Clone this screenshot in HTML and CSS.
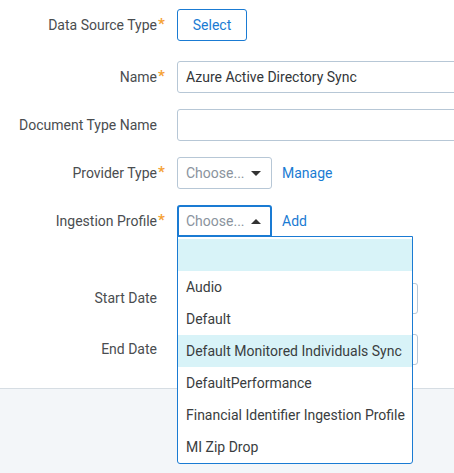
FILE: index.html
```html
<!DOCTYPE html>
<html>
<head>
<meta charset="utf-8">
<link rel="stylesheet" href="styles.css">
</head>
<body>
<div class="page">
  <form class="panel">
    <div class="row row-first">
      <div class="label">Data Source Type<span class="mark">*</span></div>
      <div class="control"><button type="button" class="btn">Select</button></div>
    </div>
    <div class="row row-name">
      <div class="label">Name<span class="mark">*</span></div>
      <div class="control clip"><div class="input wide">Azure Active Directory Sync</div></div>
    </div>
    <div class="row">
      <div class="label">Document Type Name<span class="mark"></span></div>
      <div class="control clip"><div class="input wide"></div></div>
    </div>
    <div class="row">
      <div class="label">Provider Type<span class="mark">*</span></div>
      <div class="control">
        <div class="select"><span class="ph">Choose...</span><span class="caret down"></span></div>
        <a class="link">Manage</a>
      </div>
    </div>
    <div class="row">
      <div class="label">Ingestion Profile<span class="mark">*</span></div>
      <div class="control">
        <div class="combo">
          <div class="select open"><span class="ph">Choose...</span><span class="caret up"></span></div>
          <ul class="menu">
            <li class="item hl">&nbsp;</li>
            <li class="item">Audio</li>
            <li class="item">Default</li>
            <li class="item hl">Default Monitored Individuals Sync</li>
            <li class="item">DefaultPerformance</li>
            <li class="item">Financial Identifier Ingestion Profile</li>
            <li class="item">MI Zip Drop</li>
          </ul>
        </div>
        <a class="link">Add</a>
      </div>
    </div>
    <div class="row row-start">
      <div class="label">Start Date<span class="mark"></span></div>
      <div class="control"><div class="input date"></div></div>
    </div>
    <div class="row row-end">
      <div class="label">End Date<span class="mark"></span></div>
      <div class="control"><div class="input date"></div></div>
    </div>
  </form>
  <div class="footer"></div>
</div>
</body>
</html>
```
FILE: styles.css
```css
html, body {
  margin: 0;
  padding: 0;
  overflow: hidden;
}
body {
  font-family: Roboto, "Liberation Sans", Arial, sans-serif;
  font-size: 14px;
  color: #3c4043;
  background: #f3f6f9;
}
.page {
  width: 454px;
  height: 473px;
  display: flex;
  flex-direction: column;
}
.panel {
  background: #ffffff;
  border-bottom: 1px solid #d6dde3;
  padding: 9px 0 23px 0;
  margin: 0;
}
.row {
  display: grid;
  grid-template-columns: 165px 1fr;
  column-gap: 12px;
  align-items: center;
  height: 32px;
  margin-top: 16px;
}
.row-first { margin-top: 0; }
.row-name { margin-top: 20px; }
.row-start { margin-top: 45px; }
.row-end { margin-top: 19px; }
.label {
  display: flex;
  justify-content: flex-end;
  align-items: flex-start;
  color: #4a4d50;
  white-space: nowrap;
  line-height: 16px;
}
.mark {
  display: inline-block;
  width: 8px;
  color: #f5a235;
  font-size: 15px;
  font-weight: 700;
  line-height: 14px;
  padding-left: 1px;
  box-sizing: border-box;
}
.control {
  display: flex;
  align-items: center;
  gap: 10px;
  min-width: 0;
}
.control.clip {
  overflow: hidden;
}
.btn {
  width: 70px;
  height: 32px;
  border: 1px solid #1a7bd3;
  border-radius: 3px;
  background: #fff;
  color: #1a7bd3;
  font-family: inherit;
  font-size: 14px;
  padding: 0;
}
.input {
  box-sizing: border-box;
  height: 32px;
  border: 1px solid #b7c7d6;
  border-radius: 3px;
  padding: 0 8px;
  line-height: 30px;
  color: #333639;
  white-space: nowrap;
  flex: none;
}
.wide { width: 320px; }
.date { width: 241px; height: 31px; }
.select {
  box-sizing: border-box;
  width: 95px;
  height: 32px;
  border: 1px solid #b7c7d6;
  border-radius: 3px;
  padding: 0 10px 0 8px;
  display: flex;
  align-items: center;
  justify-content: space-between;
}
.select.open {
  border: 2px solid #1a7bd3;
  border-radius: 3px 3px 0 0;
  padding-left: 7px;
  padding-right: 9px;
}
.ph { color: #8a939d; }
.caret {
  width: 0;
  height: 0;
  border-left: 5px solid transparent;
  border-right: 5px solid transparent;
}
.caret.down { border-top: 5px solid #333; }
.caret.up { border-bottom: 5px solid #333; }
.link {
  color: #1a7bd3;
  cursor: pointer;
}
.combo {
  position: relative;
}
.menu {
  position: absolute;
  left: 0;
  top: 31px;
  z-index: 5;
  width: 236px;
  box-sizing: border-box;
  margin: 0;
  padding: 2px 0 0 0;
  list-style: none;
  background: #fff;
  border: 1px solid #1a7bd3;
  border-radius: 0 0 3px 3px;
}
.item {
  height: 32px;
  line-height: 32px;
  padding: 0 8px;
  color: #3a3d40;
  white-space: nowrap;
}
.item.hl { background: #d8f3f8; }
.footer {
  flex: 1;
  background: #f3f6f9;
}
```
